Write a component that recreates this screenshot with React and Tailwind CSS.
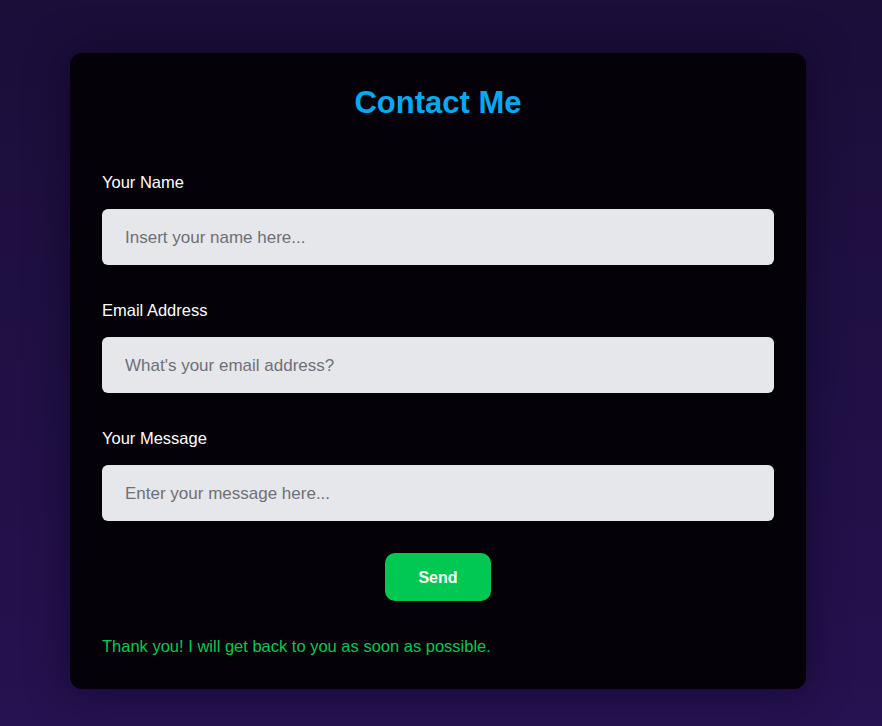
export default function App() {
  const fields = [
    { label: "Your Name", placeholder: "Insert your name here...", type: "text" },
    { label: "Email Address", placeholder: "What's your email address?", type: "email" },
    { label: "Your Message", placeholder: "Enter your message here...", type: "text" },
  ];

  return (
    <div
      className="min-h-[726px] bg-gradient-to-b from-[#1b0e39] to-[#251250] pt-[53px]"
      style={{ fontFamily: '"Liberation Sans", Arial, sans-serif' }}
    >
      <div className="ml-[70px] w-[736px] rounded-xl bg-[#040208] px-8 pt-8 pb-[31px] shadow-[0_0_40px_rgba(10,0,30,0.6)]">
        <h1 className="mb-12 text-center text-[31px] font-bold leading-9 text-[#03a9f4]">
          Contact Me
        </h1>

        <form className="flex flex-col gap-8" onSubmit={(e) => e.preventDefault()}>
          {fields.map((f) => (
            <div key={f.label} className="flex flex-col">
              <label className="mb-[15px] pt-px text-[16.5px] leading-6 text-white">{f.label}</label>
              <input
                type={f.type}
                placeholder={f.placeholder}
                className="h-14 w-full rounded-md bg-[#e5e7eb] pl-[23px] pt-px text-[17px] text-gray-700 placeholder:text-[#6f6f78] outline-none"
              />
            </div>
          ))}

          <div className="flex justify-center">
            <button
              type="submit"
              className="h-12 w-[106px] rounded-[10px] bg-[#00c853] pt-px text-base font-bold text-white"
            >
              Send
            </button>
          </div>
        </form>

        <p className="mt-8 pt-px text-[16.5px] leading-6 text-[#00c853]">
          Thank you! I will get back to you as soon as possible.
        </p>
      </div>
    </div>
  );
}
